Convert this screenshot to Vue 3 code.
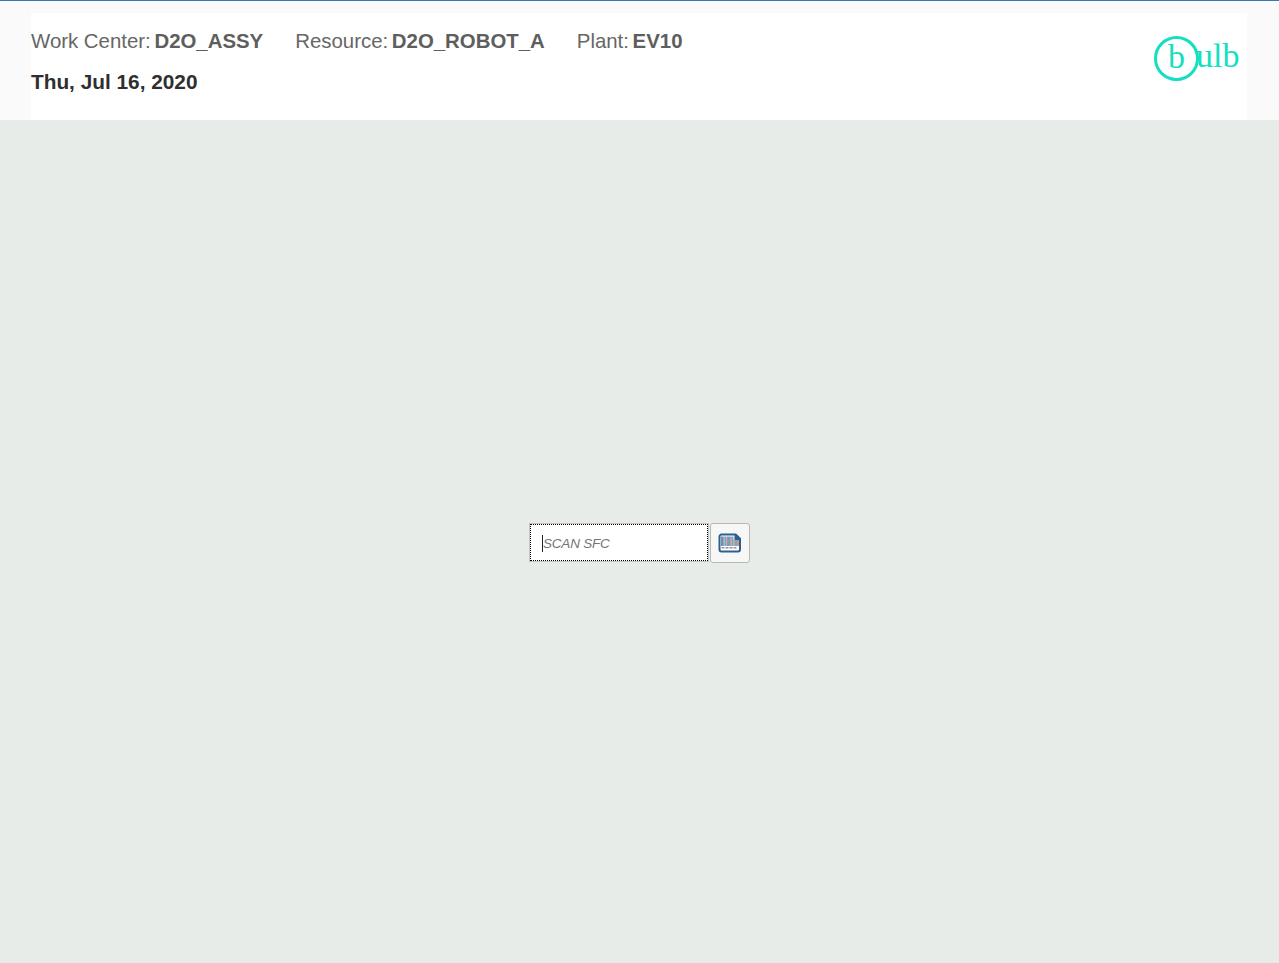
<script setup>
const fields = [
  { label: 'Work Center:', value: 'D2O_ASSY' },
  { label: 'Resource:', value: 'D2O_ROBOT_A' },
  { label: 'Plant:', value: 'EV10' },
]
const bars = [
  [3, 2, '#5f93c4', 3.5, 9.500],
  [5, 1.500, '#c39a84', 3.5, 9.500],
  [6.500, 2, '#7f9fc4', 3.5, 9.500],
  [8.500, 1.500, '#a48fbd', 3.5, 9.500],
  [10, 2, '#6fa8a4', 3.5, 9.500],
  [12, 1.500, '#c9999f', 3.5, 9.500],
  [13.500, 2, '#7d9ec0', 3.5, 9.500],
  [15.500, 1.500, '#b9aa80', 7, 6],
  [17, 2, '#7fa4c4', 7, 6],
  [19, 2, '#c39a84', 7, 6],
]
</script>

<template>
  <div class="page">
    <header class="shell">
      <div class="head">
        <div class="info">
          <div class="fields">
            <span v-for="f in fields" :key="f.label" class="field">{{ f.label }} <b>{{ f.value }}</b></span>
          </div>
          <div class="date">Thu, Jul 16, 2020</div>
        </div>
        <div class="logo">
          <span class="ring">b</span><span class="rest">ulb</span>
        </div>
      </div>
    </header>
    <main class="main">
      <div class="scan">
        <div class="input">
          <span class="caret"></span><span class="ph">SCAN SFC</span>
        </div>
        <button class="btn" type="button" aria-label="Scan">
          <svg width="24" height="20" viewBox="0 0 24 20">
            <path d="M3.500 1.500h14l4.500 4.500v10.500a2 2 0 0 1-2 2h-16.500a2 2 0 0 1-2-2v-13a2 2 0 0 1 2-2z" fill="#fff" stroke="#2a6190" stroke-width="2"/>
            <path d="M16.500 1h2l4.500 4.500v2h-6.500z" fill="#2a6190"/>
            <rect v-for="(b, i) in bars" :key="i" :x="b[0]" :y="b[3]" :width="b[1]" :height="b[4]" :fill="b[2]"/>
            <path d="M3.500 14h3v1.500h-3zM7.500 14h3v1.500h-3zM11.500 14h3v1.500h-3zM15.500 14h3v1.500h-3z" fill="#8b95a0"/>
          </svg>
        </button>
      </div>
    </main>
  </div>
</template>

<style scoped>
.page {
  height: 963px;
  display: flex;
  flex-direction: column;
  background: #e7ece8;
  font-family: "Liberation Sans", Arial, sans-serif;
}
.shell {
  height: 120px;
  box-sizing: border-box;
  border-top: 1px solid #3a78b5;
  background: #fafafa;
  padding: 12px 32px 0 31px;
}
.head {
  height: 107px;
  background: #fff;
  display: flex;
  justify-content: space-between;
}
.info {
  padding-top: 16px;
}
.fields {
  display: flex;
  gap: 32px;
  font-size: 20.4px;
  line-height: 24px;
  color: #666;
}
.field b {
  margin-left: -2px;
  font-weight: 700;
  color: #5e5e5e;
}
.date {
  margin-top: 17px;
  font-size: 20.8px;
  line-height: 24px;
  font-weight: 700;
  color: #2f2f2f;
}
.logo {
  width: 86px;
  margin-right: 7px;
  margin-top: 23px;
  height: 45px;
  font-family: "Liberation Serif", serif;
  font-size: 34px;
  line-height: 42px;
  color: #14dfc0;
  display: flex;
}
.ring {
  width: 45px;
  height: 45px;
  box-sizing: border-box;
  border: 3px solid #14dfc0;
  border-radius: 50%;
  text-align: center;
  line-height: 36px;
  flex: none;
}
.rest {
  line-height: 39px;
  margin-left: -3px;
}
.main {
  flex: 1;
  display: flex;
  align-items: center;
  justify-content: center;
  padding-top: 2px;
}
.scan {
  display: flex;
  align-items: center;
  gap: 1px;
}
.input {
  width: 180px;
  height: 39px;
  box-sizing: border-box;
  border: 1px solid #c2c6c3;
  outline: 1px dotted #000;
  outline-offset: -2px;
  background: #fff;
  display: flex;
  align-items: center;
  padding: 1px 0 0 12px;
  font-size: 13.5px;
  letter-spacing: -0.2px;
  font-style: italic;
  color: #757575;
}
.caret {
  width: 1px;
  height: 17px;
  background: #222;
  flex: none;
}
.btn {
  width: 40px;
  height: 40px;
  padding: 0;
  box-sizing: border-box;
  border: 1px solid #b8b8b8;
  border-radius: 3px;
  background: #f7f7f7;
  display: flex;
  align-items: center;
  justify-content: center;
}
</style>
